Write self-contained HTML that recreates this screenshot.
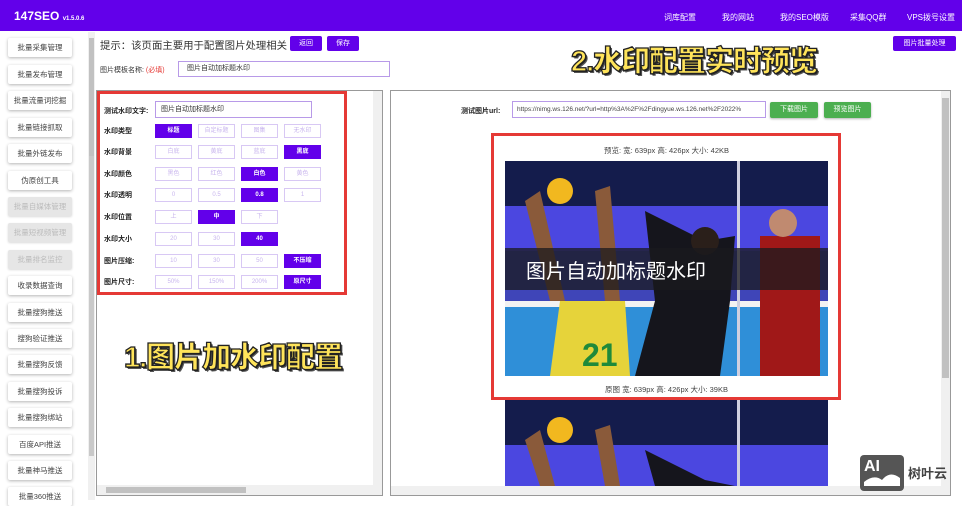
<!DOCTYPE html>
<html><head><meta charset="utf-8"><style>
*{margin:0;padding:0;box-sizing:border-box}
body{width:962px;height:500px;overflow:hidden;background:#fff;font-family:"Liberation Sans","Noto Sans CJK SC",sans-serif;position:relative;color:#333}
.a{position:absolute}
.hd{left:0;top:0;width:962px;height:31px;background:#6200ea}
.nav{color:#fff;font-size:8px;top:12px}
.sb{left:8px;width:64px;height:19px;background:#fff;box-shadow:0 1px 3px rgba(0,0,0,.3);border-radius:2px;font-size:7.5px;color:#444;text-align:center;line-height:19px}
.sb.d{background:#e6e6e6;color:#bbb;box-shadow:0 1px 2px rgba(0,0,0,.15)}
.pb{background:#6200ea;color:#fff;font-size:7px;text-align:center;border-radius:2px}
.lb{font-size:7px;color:#222;font-weight:bold;left:104px}
.ob{width:37px;height:14px;border:1px solid #d8c8f4;font-size:6px;color:#c9b6ee;text-align:center;line-height:12px;background:#fff}
.ob.s{background:#6200ea;border-color:#6200ea;color:#fff;font-weight:bold}
.big{font-weight:900;color:#ffe45a;-webkit-text-stroke:1.3px #222;text-shadow:1px 1px 0 #222,2px 2px 0 #555;font-size:29px;letter-spacing:-1px}
.gb{background:#4caf50;color:#fff;font-size:7px;text-align:center;line-height:16px;border-radius:2px;height:16px;box-shadow:0 1px 2px rgba(0,0,0,.3)}
</style></head><body>
<div class="a hd"></div>
<div class="a" style="left:14px;top:9px;color:#fff;font-size:12px;font-weight:bold">147SEO <span style="font-size:6px">v1.5.0.6</span></div>
<div class="a nav" style="left:664px">词库配置</div>
<div class="a nav" style="left:722px">我的网站</div>
<div class="a nav" style="left:780px">我的SEO模版</div>
<div class="a nav" style="left:850px">采集QQ群</div>
<div class="a nav" style="left:907px">VPS拨号设置</div>

<div class="a sb" style="top:38px">批量采集管理</div>
<div class="a sb" style="top:65px">批量发布管理</div>
<div class="a sb" style="top:91px">批量流量词挖掘</div>
<div class="a sb" style="top:118px">批量链接抓取</div>
<div class="a sb" style="top:144px">批量外链发布</div>
<div class="a sb" style="top:171px">伪原创工具</div>
<div class="a sb d" style="top:197px">批量自媒体管理</div>
<div class="a sb d" style="top:223px">批量短视频管理</div>
<div class="a sb d" style="top:250px">批量排名监控</div>
<div class="a sb" style="top:276px">收录数据查询</div>
<div class="a sb" style="top:303px">批量搜狗推送</div>
<div class="a sb" style="top:329px">搜狗验证推送</div>
<div class="a sb" style="top:355px">批量搜狗反馈</div>
<div class="a sb" style="top:382px">批量搜狗投诉</div>
<div class="a sb" style="top:408px">批量搜狗绑站</div>
<div class="a sb" style="top:435px">百度API推送</div>
<div class="a sb" style="top:461px">批量神马推送</div>
<div class="a sb" style="top:487px">批量360推送</div>
<div class="a" style="left:88px;top:32px;width:7px;height:468px;background:#f0f0f0"></div>
<div class="a" style="left:89px;top:38px;width:5px;height:118px;background:#c1c1c1"></div>
<div class="a" style="left:89px;top:156px;width:5px;height:300px;background:#c9c9c9"></div>

<div class="a" style="left:100px;top:37px;font-size:10.4px;color:#333;white-space:nowrap">提示：该页面主要用于配置图片处理相关</div>
<div class="a pb" style="left:290px;top:36px;width:32px;height:15px;line-height:15px">返回</div>
<div class="a pb" style="left:327px;top:36px;width:32px;height:15px;line-height:15px">保存</div>
<div class="a" style="left:100px;top:65px;font-size:7px">图片模板名称: <span style="color:#e53935">(必填)</span></div>
<div class="a" style="left:178px;top:61px;width:212px;height:16px;border:1px solid #b89ae8;font-size:7px;line-height:14px;padding-left:8px">图片自动加标题水印</div>
<div class="a pb" style="left:893px;top:36px;width:63px;height:15px;line-height:15px">图片批量处理</div>
<div class="a big" style="left:571px;top:38px">2.水印配置实时预览</div>

<!-- left panel -->
<div class="a" style="left:96px;top:90px;width:287px;height:406px;border:1px solid #999;background:#fff"></div>
<div class="a" style="left:373px;top:91px;width:9px;height:404px;background:#f0f0f0"></div>
<div class="a" style="left:97px;top:485px;width:276px;height:10px;background:#f0f0f0"></div>
<div class="a" style="left:106px;top:487px;width:140px;height:6px;background:#c1c1c1"></div>
<div class="a" style="left:97px;top:91px;width:250px;height:204px;border:3px solid #e53935"></div>
<div class="a lb" style="top:106px">测试水印文字:</div>
<div class="a" style="left:155px;top:101px;width:157px;height:17px;border:1px solid #b89ae8;font-size:7px;line-height:15px;padding-left:5px">图片自动加标题水印</div>
<div class="a lb" style="top:126px">水印类型</div>
<div class="a lb" style="top:147px">水印背景</div>
<div class="a lb" style="top:169px">水印颜色</div>
<div class="a lb" style="top:190px">水印透明</div>
<div class="a lb" style="top:212px">水印位置</div>
<div class="a lb" style="top:234px">水印大小</div>
<div class="a lb" style="top:256px">图片压缩:</div>
<div class="a lb" style="top:277px">图片尺寸:</div>

<div class="a ob s" style="left:155px;top:124px">标题</div><div class="a ob" style="left:198px;top:124px">自定标题</div><div class="a ob" style="left:241px;top:124px">图集</div><div class="a ob" style="left:284px;top:124px">无水印</div>
<div class="a ob" style="left:155px;top:145px">白底</div><div class="a ob" style="left:198px;top:145px">黄底</div><div class="a ob" style="left:241px;top:145px">蓝底</div><div class="a ob s" style="left:284px;top:145px">黑底</div>
<div class="a ob" style="left:155px;top:167px">黑色</div><div class="a ob" style="left:198px;top:167px">红色</div><div class="a ob s" style="left:241px;top:167px">白色</div><div class="a ob" style="left:284px;top:167px">黄色</div>
<div class="a ob" style="left:155px;top:188px">0</div><div class="a ob" style="left:198px;top:188px">0.5</div><div class="a ob s" style="left:241px;top:188px">0.8</div><div class="a ob" style="left:284px;top:188px">1</div>
<div class="a ob" style="left:155px;top:210px">上</div><div class="a ob s" style="left:198px;top:210px">中</div><div class="a ob" style="left:241px;top:210px">下</div>
<div class="a ob" style="left:155px;top:232px">20</div><div class="a ob" style="left:198px;top:232px">30</div><div class="a ob s" style="left:241px;top:232px">40</div>
<div class="a ob" style="left:155px;top:254px">10</div><div class="a ob" style="left:198px;top:254px">30</div><div class="a ob" style="left:241px;top:254px">50</div><div class="a ob s" style="left:284px;top:254px">不压缩</div>
<div class="a ob" style="left:155px;top:275px">50%</div><div class="a ob" style="left:198px;top:275px">150%</div><div class="a ob" style="left:241px;top:275px">200%</div><div class="a ob s" style="left:284px;top:275px">原尺寸</div>
<div class="a big" style="left:124px;top:334px">1.图片加水印配置</div>

<!-- right panel -->
<div class="a" style="left:390px;top:90px;width:561px;height:406px;border:1px solid #999;background:#fff"></div>
<div class="a" style="left:941px;top:91px;width:9px;height:404px;background:#f0f0f0"></div>
<div class="a" style="left:942px;top:98px;width:7px;height:280px;background:#c1c1c1"></div>
<div class="a" style="left:391px;top:486px;width:550px;height:9px;background:#f0f0f0"></div>
<div class="a lb" style="left:461px;top:106px">测试图片url:</div>
<div class="a" style="left:512px;top:101px;width:254px;height:17px;border:1px solid #b89ae8;font-size:6.5px;line-height:15px;padding-left:4px;white-space:nowrap;overflow:hidden;color:#444">https://nimg.ws.126.net/?url=http%3A%2F%2Fdingyue.ws.126.net%2F2022%</div>
<div class="a gb" style="left:770px;top:102px;width:48px">下载图片</div>
<div class="a gb" style="left:824px;top:102px;width:47px">预览图片</div>

<div class="a" style="left:491px;top:133px;width:350px;height:267px;border:3px solid #e53935"></div>
<div class="a" style="left:505px;top:145px;width:323px;text-align:center;font-size:7.5px;color:#444">预览:  宽: 639px 高: 426px 大小: 42KB</div>
<svg class="a" style="left:505px;top:161px" width="323" height="215" viewBox="0 0 323 215">
<rect width="323" height="215" fill="#1d2a6e"/>
<rect y="0" width="323" height="45" fill="#141c4c"/>
<rect y="45" width="323" height="45" fill="#4b47e0"/>
<rect y="90" width="323" height="55" fill="#3f45b8"/>
<rect y="145" width="323" height="70" fill="#2f8fd8"/>
<rect y="140" width="323" height="6" fill="#f2f2f2"/>
<rect x="232" y="0" width="3" height="215" fill="#d0d0e0"/>
<rect x="255" y="75" width="60" height="140" fill="#a01818"/>
<circle cx="278" cy="62" r="14" fill="#c08a70"/>
<path d="M140 50 L200 80 L230 75 L225 140 L215 215 L130 215 L150 140 Z" fill="#15151c"/>
<circle cx="200" cy="80" r="14" fill="#2a1f1a"/>
<path d="M55 140 L120 140 L125 215 L45 215 Z" fill="#e6d33a"/>
<text x="77" y="205" font-size="32" font-weight="bold" fill="#1f8a3a" font-family="Liberation Sans">21</text>
<path d="M20 40 L45 140 L60 140 L35 30 Z" fill="#8a5a3a"/>
<path d="M90 30 L100 140 L115 140 L105 25 Z" fill="#8a5a3a"/>
<circle cx="55" cy="30" r="13" fill="#f2b81f"/>
<rect y="87" width="323" height="42" fill="rgba(25,25,30,.75)"/>
<text x="21" y="117" font-size="20" fill="#fff" font-family="Noto Sans CJK SC,sans-serif">图片自动加标题水印</text>
</svg>
<div class="a" style="left:505px;top:384px;width:323px;text-align:center;font-size:7.5px;color:#444">原图  宽: 639px 高: 426px 大小: 39KB</div>
<svg class="a" style="left:505px;top:400px" width="323" height="86" viewBox="0 0 323 86">
<rect width="323" height="86" fill="#141c4c"/>
<rect y="45" width="323" height="41" fill="#4b47e0"/>
<rect x="232" y="0" width="3" height="86" fill="#d0d0e0"/>
<path d="M140 50 L200 80 L230 86 L150 86 Z" fill="#15151c"/>
<path d="M20 40 L35 86 L50 86 L35 30 Z" fill="#8a5a3a"/>
<path d="M90 30 L100 86 L115 86 L105 25 Z" fill="#8a5a3a"/>
<circle cx="55" cy="30" r="13" fill="#f2b81f"/>
</svg>
<div class="a" style="left:860px;top:455px;width:44px;height:36px;background:#555;border-radius:4px"></div>
<div class="a" style="left:864px;top:458px;color:#fff;font-weight:900;font-size:16px">AI</div>
<svg class="a" style="left:862px;top:470px" width="40" height="18"><path d="M2 16 L2 12 Q12 4 20 10 Q28 0 38 8 L38 16Z" fill="#fff"/></svg>
<div class="a" style="left:908px;top:463px;font-size:13px;color:#444;font-weight:bold">树叶云</div>
</body></html>
